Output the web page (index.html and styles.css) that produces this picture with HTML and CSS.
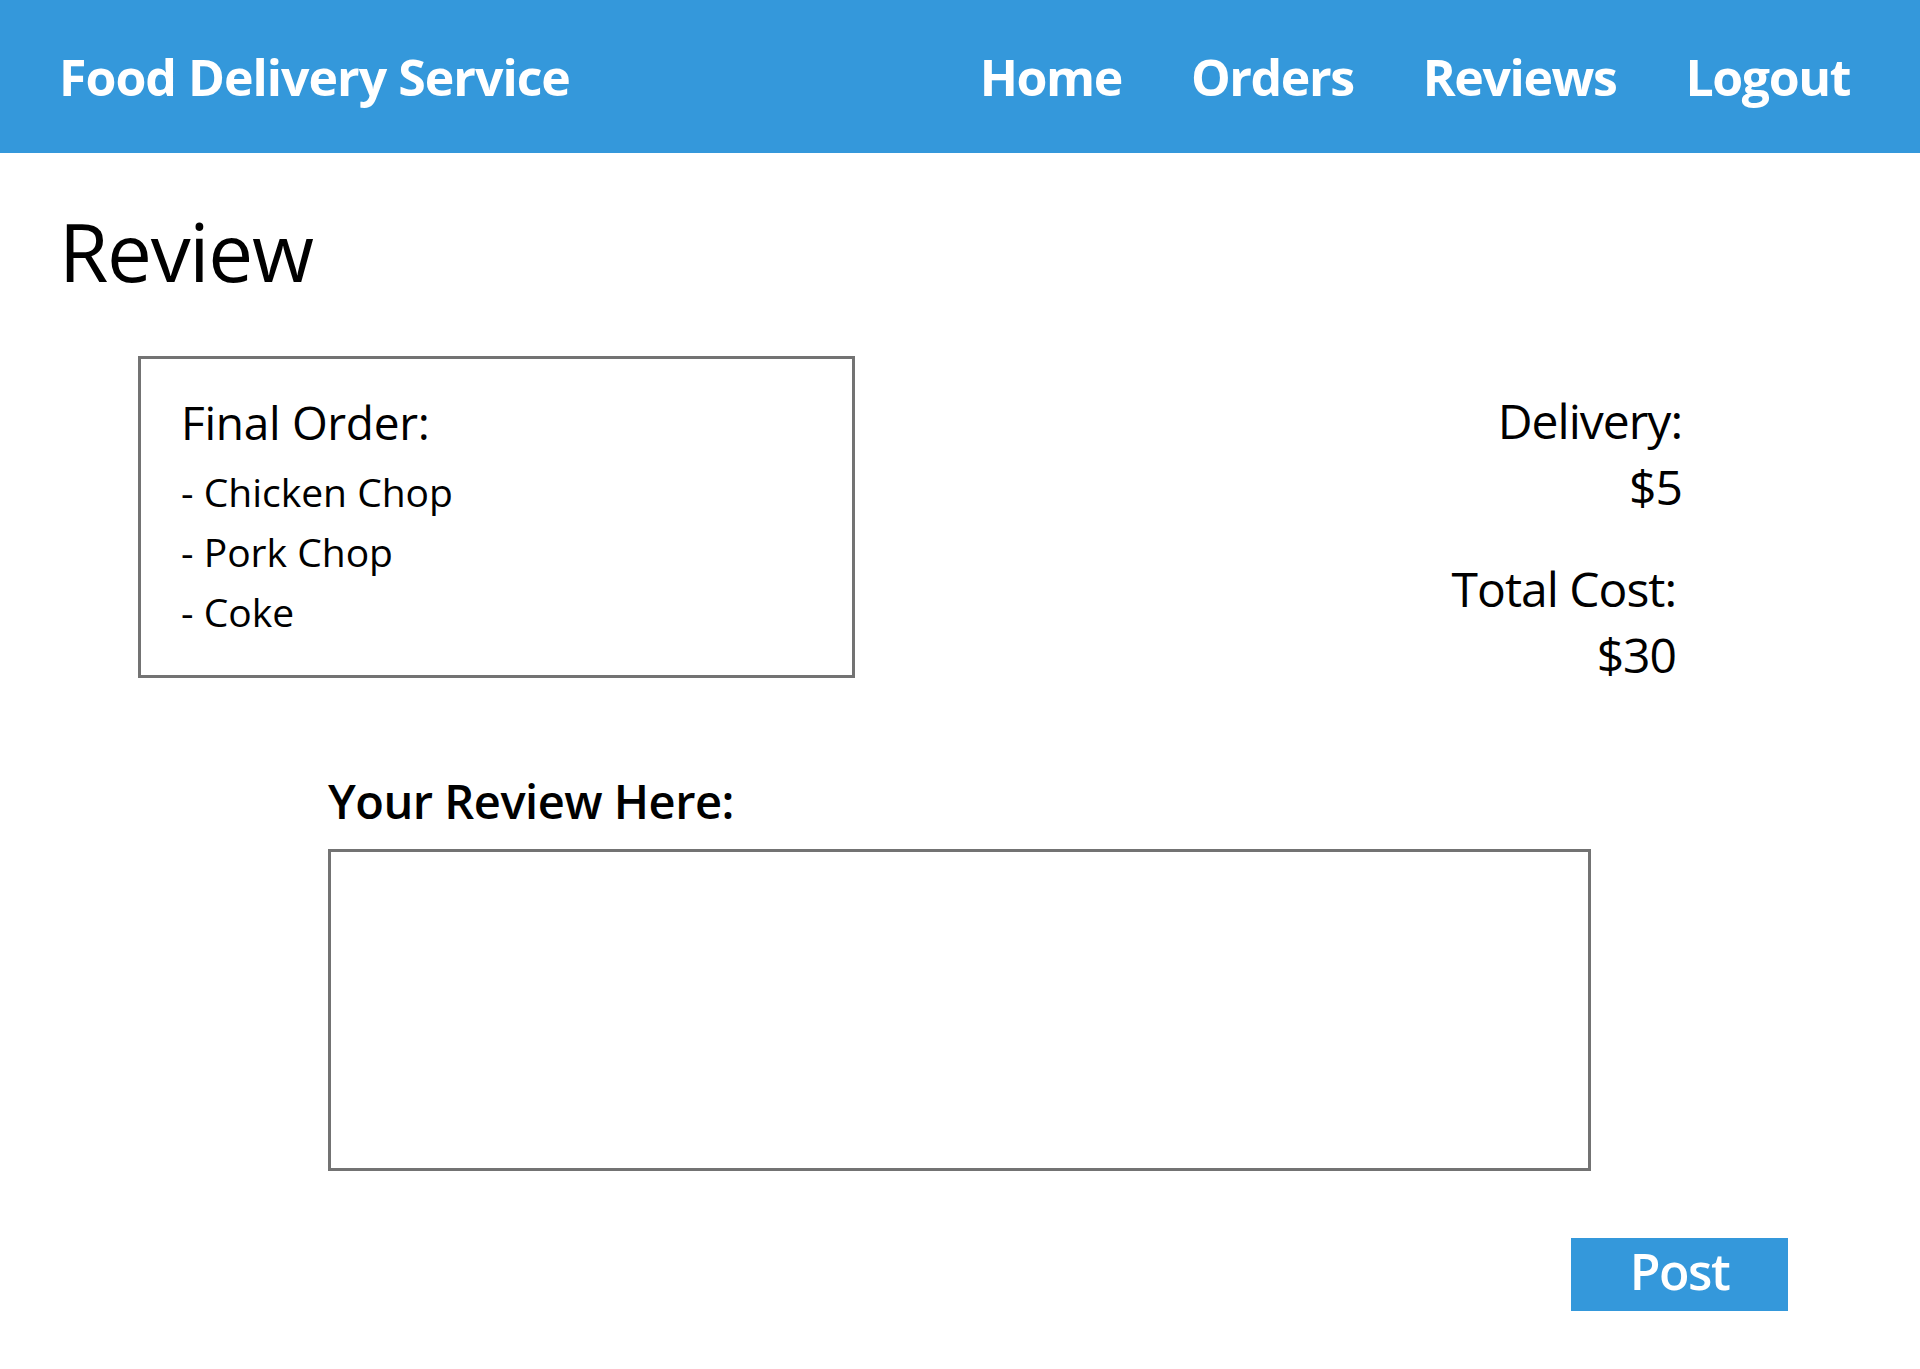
FILE: index.html
```html
<!DOCTYPE html>
<html lang="en">
<head>
<meta charset="utf-8">
<title>Review - Food Delivery Service</title>
<link rel="stylesheet" href="styles.css">
</head>
<body>
<header class="topbar">
  <div class="brand">Food Delivery Service</div>
  <nav class="nav">
    <a class="nav-link" href="#">Home</a>
    <a class="nav-link" href="#">Orders</a>
    <a class="nav-link" href="#">Reviews</a>
    <a class="nav-link" href="#">Logout</a>
  </nav>
</header>
<main class="page">
  <h1 class="page-title">Review</h1>
  <section class="summary">
    <div class="order-box">
      <div class="order-title">Final Order:</div>
      <ul class="order-list">
        <li>- Chicken Chop</li>
        <li>- Pork Chop</li>
        <li>- Coke</li>
      </ul>
    </div>
    <div class="costs">
      <div class="cost cost-delivery">
        <div class="cost-line">Delivery:</div>
        <div class="cost-line">$5</div>
      </div>
      <div class="cost cost-total">
        <div class="cost-line">Total Cost:</div>
        <div class="cost-line">$30</div>
      </div>
    </div>
  </section>
  <section class="review">
    <label class="review-label" for="review-text">Your Review Here:</label>
    <textarea id="review-text" class="review-input"></textarea>
  </section>
  <div class="actions">
    <button class="post-btn" type="button">Post</button>
  </div>
</main>
</body>
</html>
```

FILE: styles.css
```css
* {
  box-sizing: border-box;
}

html, body {
  margin: 0;
  padding: 0;
  background: #ffffff;
}

body {
  font-family: "Open Sans", "Noto Sans", "Liberation Sans", sans-serif;
  color: #000000;
}

.topbar {
  height: 153px;
  background: #3498db;
  display: flex;
  align-items: center;
  justify-content: space-between;
  padding: 0 70px 0 59px;
}

.brand {
  color: #ffffff;
  font-size: 50px;
  font-weight: 700;
  line-height: 1;
  letter-spacing: -1px;
}

.nav {
  display: flex;
  gap: 69px;
}

.nav-link {
  color: #ffffff;
  text-decoration: none;
  font-size: 50px;
  font-weight: 700;
  line-height: 1;
  letter-spacing: -1.4px;
}

.page {
  padding: 0 132px 0 59px;
}

.page-title {
  margin: 58px 0 0 0;
  font-size: 80px;
  font-weight: 400;
  line-height: 80px;
  letter-spacing: -1.3px;
}

.summary {
  margin-top: 65px;
  height: 322px;
  display: flex;
  justify-content: space-between;
  align-items: flex-start;
  padding: 0 106px 0 79px;
}

.order-box {
  width: 717px;
  height: 322px;
  border: 3px solid #737373;
  padding: 35px 38px 33px 40px;
}

.order-title {
  font-size: 46px;
  line-height: 56px;
  letter-spacing: -0.3px;
}

.order-list {
  list-style: none;
  margin: 12px 0 0 0;
  padding: 0;
}

.order-list li {
  font-size: 39px;
  line-height: 60px;
  letter-spacing: 0;
}

.costs {
  margin-top: 32px;
  text-align: right;
}

.cost-line {
  font-size: 48px;
  line-height: 66px;
  letter-spacing: -1px;
}

.cost-total {
  margin-top: 36px;
  margin-right: 6px;
}

.review {
  margin: 90px 0 0 269px;
  width: 1263px;
  display: flex;
  flex-direction: column;
}

.review-label {
  font-size: 47px;
  font-weight: 600;
  line-height: 66px;
  letter-spacing: -0.5px;
}

.review-input {
  margin-top: 15px;
  width: 1263px;
  height: 322px;
  border: 3px solid #737373;
  border-radius: 0;
  resize: none;
  font-family: inherit;
  font-size: 30px;
  padding: 10px;
  outline: none;
}

.actions {
  margin-top: 67px;
  display: flex;
  justify-content: flex-end;
}

.post-btn {
  width: 217px;
  height: 73px;
  border: none;
  border-radius: 0;
  background: #3498db;
  color: #ffffff;
  font-family: inherit;
  font-size: 50px;
  font-weight: 600;
  line-height: 67px;
  padding: 0 0 6px 0;
  letter-spacing: -1.5px;
}
```
